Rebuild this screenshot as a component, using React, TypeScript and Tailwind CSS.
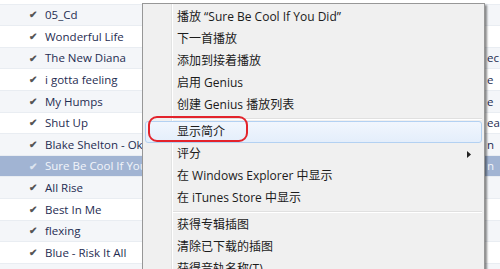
const tracks = [
  { name: '', side: '' },
  { name: '05_Cd', side: '' },
  { name: 'Wonderful Life', side: '' },
  { name: 'The New Diana', side: 'ec' },
  { name: 'i gotta feeling', side: 'e' },
  { name: 'My Humps', side: 'e' },
  { name: 'Shut Up', side: 'ea' },
  { name: 'Blake Shelton - Ok', side: 'n' },
  { name: 'Sure Be Cool If You Did', side: 'n', selected: true },
  { name: 'All Rise', side: '' },
  { name: 'Best In Me', side: '' },
  { name: 'flexing', side: '' },
  { name: 'Blue - Risk It All', side: '' },
  { name: '', side: '' },
];

type Item = { label?: string; sep?: boolean; hover?: boolean; sub?: boolean };

const menu: Item[] = [
  { label: '播放 “Sure Be Cool If You Did”' },
  { label: '下一首播放' },
  { label: '添加到接着播放' },
  { label: '启用 Genius' },
  { label: '创建 Genius 播放列表' },
  { sep: true },
  { label: '显示简介', hover: true },
  { label: '评分', sub: true },
  { label: '在 Windows Explorer 中显示' },
  { label: '在 iTunes Store 中显示' },
  { sep: true },
  { label: '获得专辑插图' },
  { label: '清除已下载的插图' },
  { label: '获得音轨名称(T)' },
];

export default function App() {
  return (
    <div
      className="relative w-[500px] h-[269px] overflow-hidden bg-white text-[12px]"
      style={{ fontFamily: '"Open Sans", "Noto Sans CJK SC", sans-serif' }}
    >
      {/* Track list behind the menu */}
      <div className="flex flex-col -mt-[17px] text-[11.5px]">
        {tracks.map((t, i) => (
          <div
            key={i}
            className={`flex h-[21.6px] items-center border-b border-[#e9edf2] ${
              t.selected ? 'bg-[#a1b4d3] text-[#f2f5fa]' : i % 2 ? 'bg-[#f4f6f9] text-[#1f2d52]' : 'bg-white text-[#1f2d52]'
            }`}
          >
            <div className="w-[142px] flex items-center shrink-0 overflow-hidden whitespace-nowrap">
              <span className="w-[29px] shrink-0" />
              {t.name && (
                <span className={`w-[16px] shrink-0 text-[10px] font-bold ${t.selected ? 'text-[#dde4ef]' : 'text-[#555]'}`}>✔</span>
              )}
              <span>{t.name}</span>
            </div>
            <div className="flex-1" />
            <div className="w-[13px] shrink-0 overflow-hidden whitespace-nowrap">{t.side}</div>
          </div>
        ))}
      </div>

      {/* Context menu */}
      <div className="absolute left-[142px] top-[3px] w-[343px] h-[300px] bg-[#f0f0f0] border border-[#979797] shadow-[2px_2px_2px_rgba(0,0,0,0.45)] pt-[2px] text-[#1b1b1b]">
        <div className="absolute left-[28px] top-0 bottom-0 w-px bg-[#e2e3e3]" />
        <div className="absolute left-[29px] top-0 bottom-0 w-px bg-white" />
        {menu.map((m, i) =>
          m.sep ? (
            <div key={i} className="h-[5px] ml-[29px] mr-[2px] flex items-center">
              <div className="w-full">
                <div className="h-px bg-[#e0e0e0]" />
                <div className="h-px bg-white" />
              </div>
            </div>
          ) : (
            <div key={i} className="relative h-[22px] px-[2px]">
              <div
                className={`h-full flex items-center pl-[31px] pr-[10px] rounded-[3px] border ${
                  m.hover
                    ? 'border-[#b3d1f2] bg-gradient-to-b from-[#f1f6fd] to-[#e4eefb]'
                    : 'border-transparent'
                }`}
              >
                <span className="flex-1 whitespace-nowrap">{m.label}</span>
                {m.sub && (
                  <svg width="4" height="7" viewBox="0 0 4 7">
                    <polygon points="0,0 4,3.5 0,7" fill="#222" />
                  </svg>
                )}
              </div>
            </div>
          )
        )}
      </div>

      {/* Red annotation around "显示简介" */}
      <div className="absolute left-[148px] top-[116px] w-[100px] h-[26px] rounded-[9px] border-2 border-[#e3232b]" />
    </div>
  );
}
